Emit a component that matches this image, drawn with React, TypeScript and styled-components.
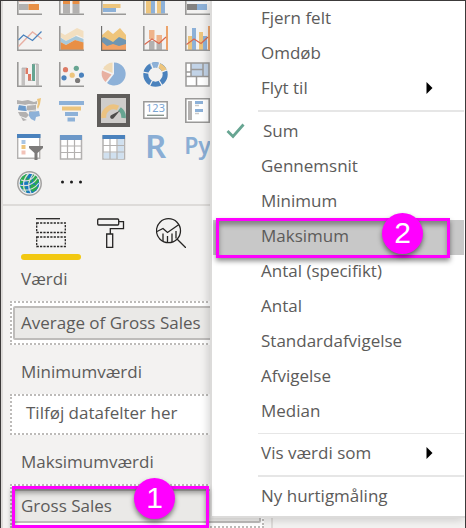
import React from "react";
import styled, { createGlobalStyle, css } from "styled-components";

const GlobalStyle = createGlobalStyle`
  *, *::before, *::after { box-sizing: border-box; }
  body {
    margin: 0;
    background: #f3f2f1;
    color: #5c5b5a;
    font: 400 17px/24px "Open Sans", "Noto Sans", sans-serif;
  }
  button { font: inherit; color: inherit; border: 0; padding: 0; background: none; text-align: left; }
`;

const Frame = styled.main`
  position: relative;
  display: flex;
  min-height: 100vh;
  overflow: hidden;
  border: 1px solid #3c3a3a;
  background: #f3f2f1;
`;

const Pane = styled.section`
  flex: 0 1 272px;
  min-width: 0;
  border-left: 2px solid #dddbd9;
  border-right: 2px solid #dddbd9;
`;

const Gallery = styled.div`
  display: grid;
  grid-template-columns: repeat(5, 25px);
  gap: 11px 17px;
  padding: 0 0 8px 14px;
  border-bottom: 2px solid #dddbd9;
`;

const VisualButton = styled.button<{ $selected?: boolean }>`
  display: block;
  width: 25px;
  svg { display: block; }
  ${(p) =>
    p.$selected &&
    css`
      background: #cfcdcb;
      outline: 4px solid #5f5d5b;
    `}
`;

const LetterButton = styled.button<{ $large?: boolean }>`
  display: flex;
  align-items: center;
  justify-content: center;
  width: 25px;
  height: 25px;
  padding-bottom: 2px;
  color: #8aaed5;
  font-family: "Noto Sans", sans-serif;
  font-size: ${(p) => (p.$large ? 33 : 23)}px;
  font-weight: 600;
  line-height: 25px;
`;

const Tabs = styled.div`
  display: flex;
  padding: 12px 0 0 18px;
`;

const Tab = styled.button<{ $active?: boolean }>`
  display: flex;
  flex-direction: column;
  align-items: center;
  gap: 6px;
  width: 60px;
  &::after {
    content: "";
    width: 60px;
    height: 6px;
    border-radius: 3px;
    background: ${(p) => (p.$active ? "#f2c811" : "transparent")};
  }
`;

const Wells = styled.div`
  padding: 5px 7px 0;
`;

const Well = styled.div`
  padding-bottom: 13px;
  &:last-child { padding-bottom: 0; }
`;

const WellLabel = styled.h2`
  margin: 0;
  padding: 0 0 8px 11px;
  font: inherit;
  line-height: 28px;
  white-space: nowrap;
`;

const DropZone = styled.div`
  position: relative;
  padding: 3px 1px;
  border: 2px dotted #bdbbb9;
  background: #fff;
`;

const Chip = styled.button`
  display: block;
  width: 100%;
  height: 34px;
  padding: 0 6px;
  border: 2px solid #bebcba;
  border-radius: 2px;
  background: #eae9e7;
  white-space: nowrap;
`;

const EmptySlot = styled.button`
  display: block;
  width: 100%;
  height: 31px;
  padding: 0 13px 3px;
  white-space: nowrap;
`;

const Menu = styled.ul`
  position: absolute;
  top: 0;
  right: 0;
  left: 209px;
  margin: 0;
  padding: 1px 0;
  border: solid #dcdbda;
  border-width: 0 0 2px 2px;
  background: #fff;
  box-shadow: -2px 2px 8px rgba(0, 0, 0, 0.16);
  list-style: none;
`;

const Entry = styled.li`
  position: relative;
`;

const EntryButton = styled.button<{ $highlighted?: boolean; $checked?: boolean }>`
  display: grid;
  grid-template-columns: 20px 1fr 8px;
  column-gap: ${(p) => (p.$checked ? 17 : 15)}px;
  align-items: center;
  width: 100%;
  height: 35px;
  padding: 0 30px 3px 13px;
  border: solid #fff;
  border-width: 0 1px;
  background: ${(p) => (p.$highlighted ? "#c8c8c8" : "transparent")};
  white-space: nowrap;
  svg { display: block; }
`;

const Separator = styled.li<{ $thin?: boolean }>`
  height: ${(p) => (p.$thin ? 1 : 2)}px;
  margin: 3px 1px 3px 46px;
  background: #e6e6e6;
`;

const Ring = styled.span<{ $right: number; $left: number; $top: number; $bottom: number }>`
  position: absolute;
  top: ${(p) => p.$top}px;
  right: ${(p) => p.$right}px;
  bottom: ${(p) => p.$bottom}px;
  left: ${(p) => p.$left}px;
  z-index: 1;
  border: 3px solid #ff00ff;
  box-shadow: 0 3px 5px rgba(0, 0, 0, 0.45), inset 0 4px 5px rgba(0, 0, 0, 0.35);
  pointer-events: none;
`;

const Badge = styled.span<{ $right: number; $top: number }>`
  position: absolute;
  top: ${(p) => p.$top}px;
  right: ${(p) => p.$right}px;
  z-index: 2;
  width: 41px;
  height: 41px;
  border-radius: 50%;
  background: #ff00ff;
  box-shadow: 0 3px 5px rgba(0, 0, 0, 0.5);
  color: #fff;
  font: 400 30px/40px "Liberation Sans", sans-serif;
  text-align: center;
  pointer-events: none;
`;

const AXIS = "#9a9998";
const BLUE = "#8db1d8";
const DEEP = "#4a82bd";
const YELLOW = "#edc57d";
const ORANGE = "#e88f45";
const GREY = "#b3b1b0";
const GREEN = "#67a592";
const RED = "#dd7b66";

const Axis = () => <path d="M.8 0V24.2H25" fill="none" stroke={AXIS} strokeWidth="1.6" />;

const Icon = ({ children }: { children: React.ReactNode }) => (
  <svg width="25" height="25" viewBox="0 0 25 25" aria-hidden="true">{children}</svg>
);

const CutIcon = ({ children }: { children: React.ReactNode }) => (
  <svg width="25" height="14" viewBox="0 11 25 14" aria-hidden="true">{children}<Axis /></svg>
);

const cutIcons: [string, React.ReactNode][] = [
  ["Stablet liggende søjlediagram", <CutIcon><path d="M2 11h16v.8H2z" fill="#e8b8ac" /><path d="M2 14h9.500v6H2z" fill={GREY} /><path d="M11.500 14H22v6H11.500z" fill={ORANGE} /></CutIcon>],
  ["Stablet søjlediagram", <CutIcon><path d="M4 11h7v3H4zM13.500 11h7v3h-7z" fill={ORANGE} /><path d="M4 14h7v9.500H4zM13.500 14h7v9.500h-7z" fill={GREY} /></CutIcon>],
  ["Grupperet liggende søjlediagram", <CutIcon><path d="M2 14h17.500v4H2z" fill={YELLOW} /><path d="M2 18h13v4H2z" fill={BLUE} /></CutIcon>],
  ["Grupperet søjlediagram", <CutIcon><path d="M3 11h5v12.500H3zM14 11h4v12.500h-4z" fill={YELLOW} /><path d="M8 11h4v12.500H8zM18 11h4v12.500h-4z" fill={BLUE} /></CutIcon>],
  ["100 % stablet søjlediagram", <CutIcon><path d="M2 11h20v.8H2z" fill="#d2dce7" /><path d="M2 14h10v6H2z" fill="#838281" /><path d="M12 14h10v6H12z" fill={BLUE} /></CutIcon>],
];

const icons: [string, React.ReactNode][] = [
  ["Kurvediagram", <Icon><Axis /><path d="M1.500 20.500 15.500 6 25 13" fill="none" stroke="#e8b0a4" strokeWidth="1.400" /><path d="M1.500 14 6.500 9l9 5.500 9-9" fill="none" stroke={DEEP} strokeWidth="1.300" /></Icon>],
  ["Områdediagram", <Icon><path d="M1.500 6.500 6 9l12-7 6.500 3v7L18 9 7 15l-5.500-4z" fill="#f3dfc0" /><path d="M1.500 11.500 7 15l10-5 7.500 3v4L16 14 7 19l-5.500-3z" fill="#a9c9da" /><path d="M1.500 16 7 19l9-5 8.500 2.500V24h-23z" fill={ORANGE} /><Axis /></Icon>],
  ["Stablet områdediagram", <Icon><path d="M1 9l6-5 5 4 7-6 6 7v14H1z" fill="#efc57b" /><path d="M1 12l2-1 9 5 6-5 7 3v9H1z" fill="#6f96b3" /><path d="M1 16l5 4 6-2 6 2 7-2v6H1z" fill="#f2a265" /><path d="M.5 0V24.500H25" fill="none" stroke="#6f6e6d" strokeWidth="1.300" /></Icon>],
  ["Kurve- og stablet søjlediagram", <Icon><path d="M6 4h5.500v9H6zM13.500 9H19v8h-5.500z" fill="#efb38a" /><path d="M6 15h5.500v9H6zM13.500 17H19v7h-5.500z" fill={GREY} /><Axis /><path d="M24 0v24" stroke="#eca36b" strokeWidth="2" /><path d="M1.500 18.500 9 13l7 4.500L23 11" fill="none" stroke="#d9694f" strokeWidth="1.200" /></Icon>],
  ["Kurve- og grupperet søjlediagram", <Icon><path d="M3 10h4v14H3zM14 6h4v18h-4z" fill={YELLOW} /><path d="M7 2h4v22H7zM18 10h4v14h-4z" fill={BLUE} /><Axis /><path d="M24 0v24" stroke="#eca36b" strokeWidth="2" /><path d="M1.500 18.500 9 13l7 4.500L23 11" fill="none" stroke="#d9694f" strokeWidth="1.200" /></Icon>],

  ["Vandfaldsdiagram", <Icon><path d="M4.500 6H8v17.500H4.500zM19 2h3v21.500h-3z" fill="#c3c1c0" /><path d="M8.500 6H11v6H8.500zM11 12h3v7h-3z" fill={RED} /><path d="M15 2h3v17h-3z" fill={GREEN} /><path d="M5 6h5M11 18.500h5M16 2h5" stroke="#a9a8a7" strokeWidth=".7" /><Axis /></Icon>],
  ["Punktdiagram", <Icon><Axis /><circle cx="6.500" cy="7.700" r="2.600" fill={RED} /><circle cx="17.300" cy="6.300" r="2.600" fill={GREEN} /><circle cx="13.200" cy="13.200" r="2.600" fill={YELLOW} /><circle cx="5" cy="15.800" r="2.600" fill={DEEP} /><circle cx="22.500" cy="13.200" r="2.600" fill={DEEP} /><circle cx="18.600" cy="18.500" r="2.600" fill="#7b7978" /></Icon>],
  ["Cirkeldiagram", <Icon><path d="M13 12V.5A11.500 11.500 0 1 1 6 21z" fill={BLUE} /><path d="M11.500 11V.5A11.500 11.500 0 0 0 2 7z" fill="#f0dbb7" /><path d="M10.500 12.500 1 8.500A12 12 0 0 0 4.500 20z" fill="#e8b0a1" /></Icon>],
  ["Kransediagram", <Icon><g fill="none" strokeWidth="5"><circle cx="12.500" cy="12.500" r="9.700" stroke={DEEP} /><path d="M7.600 4.100A9.700 9.700 0 0 1 16 3.500" stroke={BLUE} /><path d="M16 3.500a9.700 9.700 0 0 1 5.500 5.500" stroke={YELLOW} /></g><path d="M12.500 12.500 7-1M12.500 12.500 17 0M12.500 12.500 25 7.500M12.500 12.500 20 25M12.500 12.500 6 25M12.500 12.500-1 10" stroke="#f3f2f1" strokeWidth="1.200" /></Icon>],
  ["Træstruktur", <Icon><path d="M1 1h23v23H1z" fill="#fff" /><path d="M6 1h18v13H6z" fill="#c2d3e7" /><path d="M1 1h23v23H1zM1 14.500h23M6 1v13M6 7.500h12M18 1v13M1 10h5M11.500 14.500V24" fill="none" stroke={AXIS} strokeWidth="1.500" /></Icon>],

  ["Udfyldt kort", <Icon><path d="M0 2l5 1 6-1 6 2 3-1v3l-4 1-4-1-4 1-8-1zM10 7h9v6l-6 1-3-2zM1 14l8 0 3 3-3 3-6-2zM4 19l6 3-4 1z" fill={GREY} /><path d="M2 7l7 1 1 5-9-1zM12 14l10-1 1 5-4 1-1 4-4-2-2-3z" fill={BLUE} /><path d="M2 7l6 1 1 5-8-1z" fill="#6d9bcb" /><path d="M20 1l4-1-1 6-2 5-1-2 1-4z" fill={YELLOW} /><path d="M1 6.500l8 1 9-1M10 13l10-1" stroke="#f3f2f1" fill="none" strokeWidth=".8" /></Icon>],
  ["Tragtdiagram", <Icon><path d="M0 3h25v4H0zM6 14h13v4H6zM8.500 19.500H16v4H8.500z" fill={BLUE} /><path d="M3 8.500h19v4H3z" fill={YELLOW} /></Icon>],
  ["Måler", <Icon><path d="M2.800 20A9.800 9.800 0 0 1 17 10" fill="none" stroke="#ecc381" strokeWidth="5" /><path d="M18.500 11a9.800 9.800 0 0 1 4 9" fill="none" stroke={GREEN} strokeWidth="4.600" /><path d="M19 12.500 10.500 17a2 2 0 1 0 2.500 2.700z" fill="#4e4d4c" /></Icon>],
  ["Kort", <Icon><path d="M.8 3.800h23.400v16.400H.8z" fill="#fff" stroke={AXIS} strokeWidth="1.500" /><text x="12.500" y="14" textAnchor="middle" fontFamily="Noto Sans" fontSize="11" fontWeight="400" fill="#7aa5d2">123</text><path d="M4 17.300h17" stroke="#819088" strokeWidth="1.300" /></Icon>],
  ["KPI", <Icon><path d="M.8.800h23.400v23.400H.8z" fill="#fff" stroke={AXIS} strokeWidth="1.600" /><path d="M3 3h4v19H3z" fill={GREY} /><path d="M10 3h8v3h-8zM10 11h8v3h-8z" fill={BLUE} /><path d="M10 7.500h4M10 15.500h4" stroke="#cbc9c8" strokeWidth="1.500" /></Icon>],

  ["Udsnit", <svg width="28" height="26" viewBox="0 0 28 26" aria-hidden="true"><path d="M.7 1h22v23.300H.7z" fill="#fff" stroke={GREY} strokeWidth="1.400" /><path d="M0 0h23.500v4H0z" fill={DEEP} /><path d="M4.500 6h4v4h-4z" fill="#a8c5e4" /><path d="M4.500 11h4v4h-4z" fill={YELLOW} /><path d="M4.500 16.500h4v4h-4z" fill="#f2c3b8" /><path d="M12 12h14v2l-5.500 5v7h-3v-7L12 14z" fill="#7d7b7a" /></svg>],
  ["Tabel", <Icon><path d="M1.500 1h21v23h-21z" fill="#fff" stroke={GREY} strokeWidth="1.500" /><path d="M8.500 5v19M15.500 5v19M1.500 11h21M1.500 17.500h21" stroke={GREY} strokeWidth="1.200" /><path d="M1 0h22v5H1z" fill="#6c98c8" /></Icon>],
  ["Matrix", <Icon><path d="M2 1h21.500v23H2z" fill="#fff" stroke={GREY} strokeWidth="1.500" /><path d="M16.500 4h6.300v20h-6.300zM2.700 17.500h20v6h-20z" fill="#d0e0ef" /><path d="M9 4v20M16 4v20M2 10.500h21.500M2 17h21.500" stroke={GREY} strokeWidth="1.200" /><path d="M1.500 0h22.500v4H1.500z" fill={DEEP} /></Icon>],
];

const Globe = () => (
  <Icon>
    <circle cx="12.500" cy="12.500" r="11.700" fill="#f3f2f1" stroke="#a3a2a1" strokeWidth="1.500" />
    <circle cx="12.500" cy="12.500" r="9.800" fill="#1778be" />
    <path d="M3.500 8C5 5 8 3 11 3l-1 5-4 3-3 3zM15 3c4 1 6 4 7 7l-3 4-3-4zM3 14l5 2 2 5-3-1zM14 13l5 1 2 3-5 4-3-3zM10 8l4-1 1 4-4 1z" fill="#2dab4c" />
    <path d="M4 9c6 2 11 0 14-5M2.500 14c8 2 14-1 18-7M5 19c7 1 13-2 17-7M12 2C6 8 5 15 9 22M16 3c-5 7-6 13-2 19" fill="none" stroke="#dcdfdb" strokeWidth="1.200" />
  </Icon>
);

const Dots = () => (
  <Icon><g fill="#1d1d1d"><circle cx="3.500" cy="11" r="1.500" /><circle cx="12.500" cy="11" r="1.500" /><circle cx="21.500" cy="11" r="1.500" /></g></Icon>
);

const TabIcon = ({ children }: { children: React.ReactNode }) => (
  <svg width="30" height="30" viewBox="0 0 30 30" fill="none" stroke="#252423" strokeWidth="1.300" aria-hidden="true">{children}</svg>
);

const Check = () => (
  <svg width="20" height="16" viewBox="0 0 20 16" fill="none" stroke="#67a592" strokeWidth="2.800" aria-hidden="true"><path d="m1.500 8 5.500 5.500L17.500 1.500" /></svg>
);

const Arrow = () => (
  <svg width="7" height="12" viewBox="0 0 7 12" aria-hidden="true"><path d="M.5 0 6.500 6l-6 6z" fill="#000" /></svg>
);

type Item = { label: string; checked?: boolean; submenu?: boolean; highlighted?: boolean };

const fieldActions: Item[] = [{ label: "Fjern felt" }, { label: "Omdøb" }, { label: "Flyt til", submenu: true }];
const aggregations: Item[] = [
  { label: "Sum", checked: true },
  { label: "Gennemsnit" },
  { label: "Minimum" },
  { label: "Maksimum", highlighted: true },
  { label: "Antal (specifikt)" },
  { label: "Antal" },
  { label: "Standardafvigelse" },
  { label: "Afvigelse" },
  { label: "Median" },
];

const MenuEntry = ({ label, checked, submenu, highlighted }: Item) => (
  <Entry role="none">
    <EntryButton
      role={checked ? "menuitemradio" : "menuitem"}
      aria-checked={checked}
      aria-haspopup={submenu ? "menu" : undefined}
      $highlighted={highlighted}
      $checked={checked}
    >
      <span>{checked && <Check />}</span>
      <span>{label}</span>
      {submenu && <Arrow />}
    </EntryButton>
    {highlighted && (
      <>
        <Ring $top={-2} $right={15} $bottom={-3} $left={4} />
        <Badge $top={-7} $right={42}>2</Badge>
      </>
    )}
  </Entry>
);

export default function App() {
  return (
    <>
      <GlobalStyle />
      <Frame>
        <Pane>
          <Gallery>
            {[...cutIcons, ...icons.slice(0, 12)].map(([name, drawing]) => (
              <VisualButton key={name} aria-label={name}>{drawing}</VisualButton>
            ))}
            <VisualButton $selected aria-label={icons[12][0]}>{icons[12][1]}</VisualButton>
            {icons.slice(13).map(([name, drawing]) => (
              <VisualButton key={name} aria-label={name}>{drawing}</VisualButton>
            ))}
            <LetterButton $large>R</LetterButton>
            <LetterButton>Py</LetterButton>
            <VisualButton aria-label="ArcGIS-kort"><Globe /></VisualButton>
            <VisualButton aria-label="Flere indstillinger"><Dots /></VisualButton>
          </Gallery>
          <Tabs role="tablist">
            <Tab role="tab" aria-selected="true" aria-label="Felter" $active>
              <TabIcon>
                <path d="M0 .7h24" />
                <path d="M.7 5h28.600v9.500H.7zM.7 19h28.600v9.500H.7z" strokeDasharray="2.200 1.200" />
              </TabIcon>
            </Tab>
            <Tab role="tab" aria-label="Formatér">
              <TabIcon>
                <rect x="1.700" y="1" width="21" height="6" rx="1" />
                <path d="M23 3.700h4.500v7H14.300V16" />
                <path d="M10.700 16h6v13.300h-6z" />
              </TabIcon>
            </Tab>
            <Tab role="tab" aria-label="Analyse">
              <TabIcon>
                <circle cx="12.500" cy="12.700" r="12" />
                <path d="m21 21 9 9M1 13.500l6-3 4.500 4L23 6.500M7 15.500V23M11.500 18v6.500M16 15.500V24M20 13v7.500" />
              </TabIcon>
            </Tab>
          </Tabs>
          <Wells>
            <Well>
              <WellLabel>Værdi</WellLabel>
              <DropZone><Chip>Average of Gross Sales</Chip></DropZone>
            </Well>
            <Well>
              <WellLabel>Minimumværdi</WellLabel>
              <DropZone><EmptySlot>Tilføj datafelter her</EmptySlot></DropZone>
            </Well>
            <Well>
              <WellLabel>Maksimumværdi</WellLabel>
              <DropZone>
                <Chip>Gross Sales</Chip>
                <Ring $top={0} $right={53} $bottom={-2} $left={0} />
                <Badge $top={-8} $right={87}>1</Badge>
              </DropZone>
            </Well>
          </Wells>
        </Pane>
        <Menu role="menu">
          {fieldActions.map((item) => <MenuEntry key={item.label} {...item} />)}
          <Separator role="separator" />
          {aggregations.map((item) => <MenuEntry key={item.label} {...item} />)}
          <Separator role="separator" $thin />
          <MenuEntry label="Vis værdi som" submenu />
          <Separator role="separator" />
          <MenuEntry label="Ny hurtigmåling" />
        </Menu>
      </Frame>
    </>
  );
}
